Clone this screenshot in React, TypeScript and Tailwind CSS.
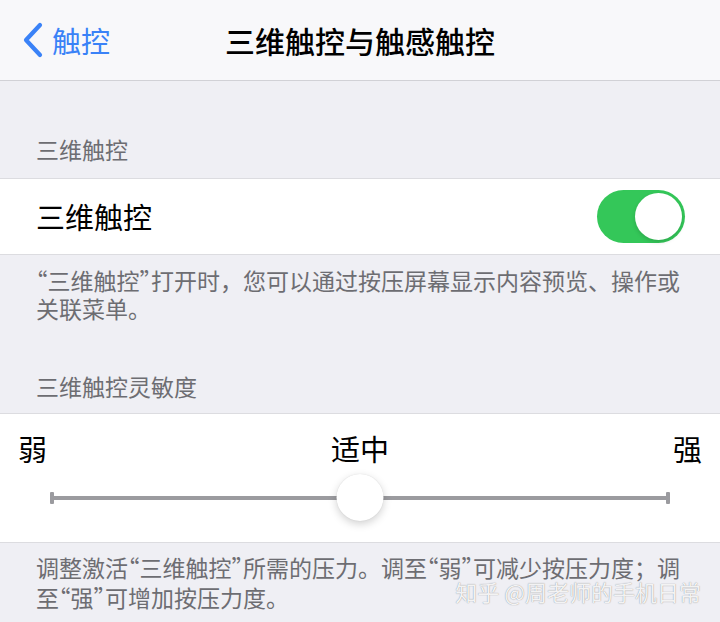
import React from 'react';

const font = { fontFamily: '"Noto Sans CJK SC", "Noto Sans", sans-serif' };

// iOS sets the curly quotes on half-width advances
function Q({ children }: { children: React.ReactNode }) {
  return <span className="[font-feature-settings:'halt']">{children}</span>;
}

function Toggle() {
  return (
    <div className="relative h-[53px] w-[88px] rounded-full bg-[#34c759]">
      <div className="absolute right-[3px] top-[3px] h-[47px] w-[47px] rounded-full bg-white shadow-[0_2px_4px_rgba(0,0,0,0.15)]" />
    </div>
  );
}

function Slider() {
  return (
    <div className="relative mx-[50px] h-[48px]">
      <div className="absolute left-0 right-0 top-[22px] h-[4px] bg-[#9b9b9f]" />
      <div className="absolute left-0 top-[18px] h-[12px] w-[4px] rounded-[1px] bg-[#9b9b9f]" />
      <div className="absolute right-0 top-[18px] h-[12px] w-[4px] rounded-[1px] bg-[#9b9b9f]" />
      <div className="absolute left-1/2 top-0 h-[47px] w-[47px] -translate-x-1/2 rounded-full bg-white shadow-[0_3px_8px_rgba(0,0,0,0.18),0_0_1px_rgba(0,0,0,0.15)]" />
    </div>
  );
}

export default function App() {
  return (
    <div style={font} className="relative h-[622px] w-[720px] overflow-hidden bg-[#efeff4]">
      {/* Nav bar */}
      <div className="relative flex h-[81px] items-center border-b border-[#d1d1d6] bg-[#f8f8fa]">
        <div className="flex items-center pl-[22px] text-[#3a82f7]">
          <svg width="22" height="36" viewBox="0 0 22 36" fill="none">
            <path d="M18 3 L4 18 L18 33" stroke="#3a82f7" strokeWidth="4.2" strokeLinecap="round" strokeLinejoin="round" />
          </svg>
          <span className="ml-[8px] text-[29px] leading-none">触控</span>
        </div>
        <div className="absolute inset-x-0 top-0 flex h-[80px] items-center justify-center">
          <span className="text-[30px] font-medium leading-none text-black">三维触控与触感触控</span>
        </div>
      </div>

      {/* 三维触控 section */}
      <div className="px-[36px] pb-[14px] pt-[53px] text-[23px] leading-[30px] text-[#6d6d72]">三维触控</div>
      <div className="flex h-[77px] items-center justify-between border-y border-[#dcdce0] bg-white pl-[36px] pr-[35px]">
        <span className="text-[29px] text-black">三维触控</span>
        <Toggle />
      </div>
      <div className="whitespace-nowrap px-[36px] pt-[11px] text-[23px] leading-[28px] text-[#6d6d72]">
        <Q>“</Q>三维触控<Q>”</Q>打开时，您可以通过按压屏幕显示内容预览、操作或
        <br />
        关联菜单。
      </div>

      {/* Sensitivity section */}
      <div className="px-[36px] pb-[12px] pt-[49px] text-[23px] leading-[30px] text-[#6d6d72]">三维触控灵敏度</div>
      <div className="h-[130px] border-y border-[#dcdce0] bg-white">
        <div className="flex items-center justify-between px-[18px] pt-[16px] text-[29px] leading-[36px] text-black">
          <span>弱</span>
          <span>适中</span>
          <span>强</span>
        </div>
        <div className="pt-[8px]">
          <Slider />
        </div>
      </div>
      <div className="whitespace-nowrap px-[36px] pt-[9px] text-[23px] leading-[30px] text-[#6d6d72]">
        调整激活<Q>“</Q>三维触控<Q>”</Q>所需的压力。调至<Q>“</Q>弱<Q>”</Q>可减少按压力度；调
        <br />
        至<Q>“</Q>强<Q>”</Q>可增加按压力度。
      </div>

      {/* Watermark */}
      <div className="absolute right-[19px] top-[576px] text-[22px] leading-[30px] text-white/90 [text-shadow:0_0_1px_rgba(0,0,0,0.5)]">
        知乎 @周老师的手机日常
      </div>
    </div>
  );
}
